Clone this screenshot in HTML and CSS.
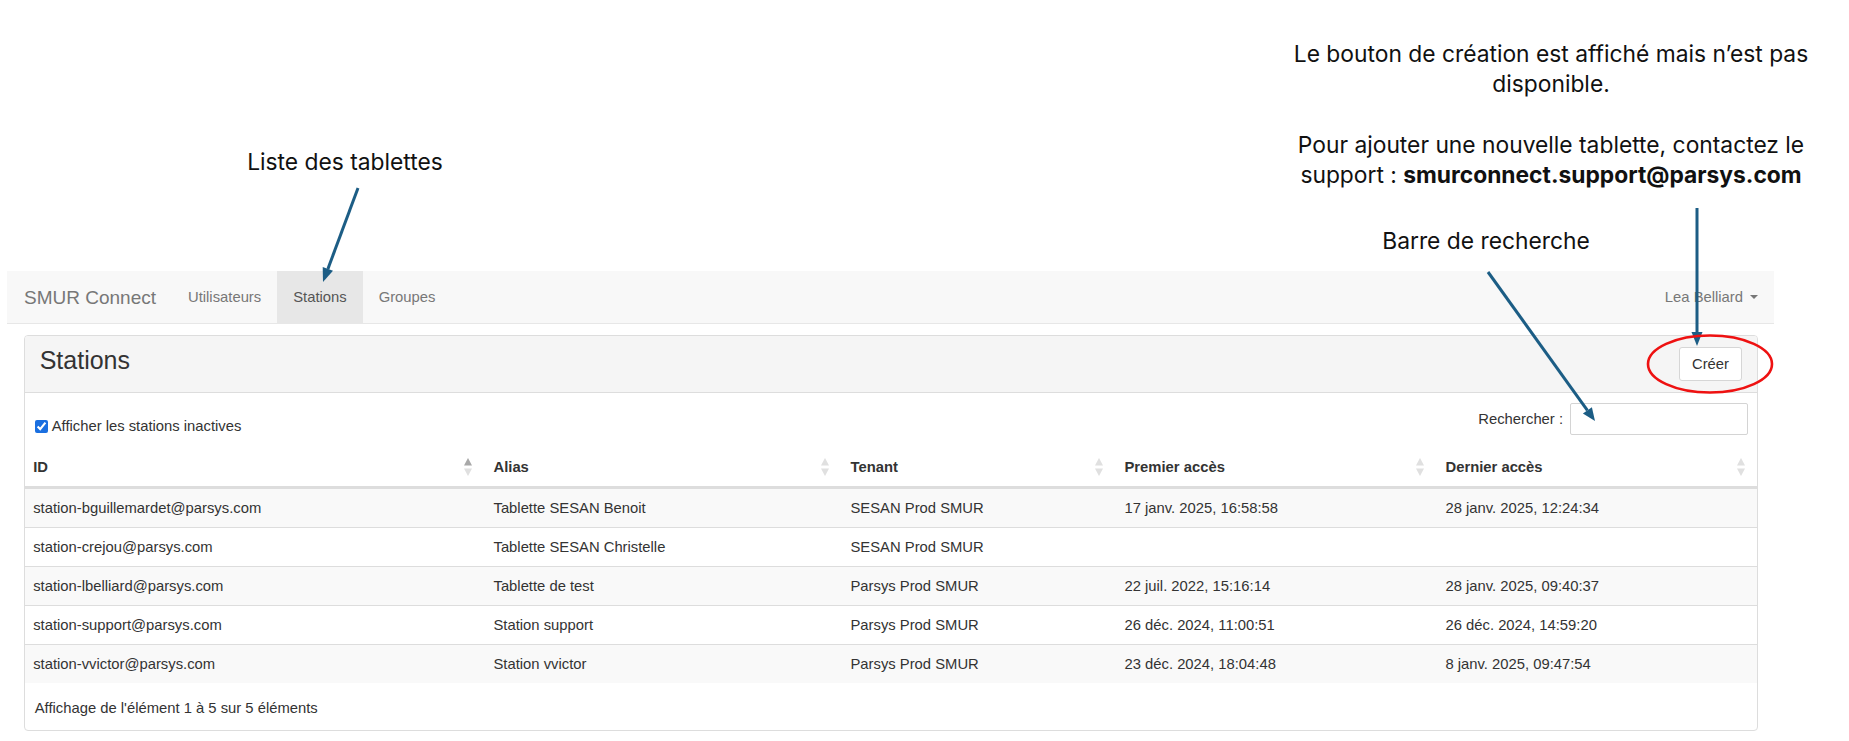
FILE: index.html
```html
<!DOCTYPE html>
<html lang="fr">
<head>
<meta charset="utf-8">
<title>Stations - SMUR Connect</title>
<link rel="stylesheet" href="styles.css">
</head>
<body>
<div class="page">
  <section class="notes">
    <p class="note note-list">Liste des tablettes</p>
    <div class="note note-create">
      <p>Le bouton de création est affiché mais n’est pas<br>disponible.</p>
      <p>Pour ajouter une nouvelle tablette, contactez le<br>support : <strong>smurconnect.support@parsys.com</strong></p>
    </div>
    <p class="note note-search">Barre de recherche</p>
  </section>

  <div class="app">
    <nav class="navbar">
      <a class="brand">SMUR Connect</a>
      <ul class="nav">
        <li><a>Utilisateurs</a></li>
        <li class="active"><a>Stations</a></li>
        <li><a>Groupes</a></li>
      </ul>
      <div class="user">Lea Belliard<span class="caret"></span></div>
    </nav>

    <main class="content">
      <div class="panel">
        <div class="panel-heading">
          <h3 class="panel-title">Stations</h3>
          <button class="btn" type="button">Créer</button>
        </div>

        <div class="controls">
          <label class="inactive"><input type="checkbox" checked>Afficher les stations inactives</label>
          <label class="search">Rechercher :<input type="search"></label>
        </div>

        <table class="stations">
          <colgroup>
            <col class="c-id"><col class="c-alias"><col class="c-tenant"><col class="c-first"><col class="c-last">
          </colgroup>
          <thead>
            <tr>
              <th><div class="th"><span>ID</span><svg class="sort asc" viewBox="0 0 8 18"><path class="up" d="M0 7.5 L4 0 L8 7.5 Z"/><path class="down" d="M0 10.5 L8 10.5 L4 18 Z"/></svg></div></th>
              <th><div class="th"><span>Alias</span><svg class="sort" viewBox="0 0 8 18"><path class="up" d="M0 7.5 L4 0 L8 7.5 Z"/><path class="down" d="M0 10.5 L8 10.5 L4 18 Z"/></svg></div></th>
              <th><div class="th"><span>Tenant</span><svg class="sort" viewBox="0 0 8 18"><path class="up" d="M0 7.5 L4 0 L8 7.5 Z"/><path class="down" d="M0 10.5 L8 10.5 L4 18 Z"/></svg></div></th>
              <th><div class="th"><span>Premier accès</span><svg class="sort" viewBox="0 0 8 18"><path class="up" d="M0 7.5 L4 0 L8 7.5 Z"/><path class="down" d="M0 10.5 L8 10.5 L4 18 Z"/></svg></div></th>
              <th><div class="th"><span>Dernier accès</span><svg class="sort" viewBox="0 0 8 18"><path class="up" d="M0 7.5 L4 0 L8 7.5 Z"/><path class="down" d="M0 10.5 L8 10.5 L4 18 Z"/></svg></div></th>
            </tr>
          </thead>
          <tbody>
            <tr><td>station-bguillemardet@parsys.com</td><td>Tablette SESAN Benoit</td><td>SESAN Prod SMUR</td><td>17 janv. 2025, 16:58:58</td><td>28 janv. 2025, 12:24:34</td></tr>
            <tr><td>station-crejou@parsys.com</td><td>Tablette SESAN Christelle</td><td>SESAN Prod SMUR</td><td></td><td></td></tr>
            <tr><td>station-lbelliard@parsys.com</td><td>Tablette de test</td><td>Parsys Prod SMUR</td><td>22 juil. 2022, 15:16:14</td><td>28 janv. 2025, 09:40:37</td></tr>
            <tr><td>station-support@parsys.com</td><td>Station support</td><td>Parsys Prod SMUR</td><td>26 déc. 2024, 11:00:51</td><td>26 déc. 2024, 14:59:20</td></tr>
            <tr><td>station-vvictor@parsys.com</td><td>Station vvictor</td><td>Parsys Prod SMUR</td><td>23 déc. 2024, 18:04:48</td><td>8 janv. 2025, 09:47:54</td></tr>
          </tbody>
        </table>

        <div class="info">Affichage de l'élément 1 à 5 sur 5 éléments</div>
      </div>
    </main>
  </div>

  <svg class="overlay" viewBox="0 0 1849 741" width="1849" height="741">
    <g class="arrow">
      <line x1="358" y1="188" x2="327.9" y2="268.9"/>
      <polygon points="323,282 333.0,270.8 322.7,267.0"/>
      <line x1="1697" y1="208" x2="1697" y2="333"/>
      <polygon points="1697,346 1691.5,332 1702.5,332"/>
      <line x1="1488" y1="272" x2="1587.4" y2="410.4"/>
      <polygon points="1595,421 1591.9,407.2 1582.9,413.6"/>
    </g>
    <ellipse class="ring" cx="1710" cy="364" rx="62" ry="28.5"/>
  </svg>
</div>
</body>
</html>
```

FILE: styles.css
```css
* { box-sizing: border-box; }

html, body {
  margin: 0;
  padding: 0;
  background: #ffffff;
}

body {
  font-family: "Liberation Sans", Arial, Helvetica, sans-serif;
  font-size: 14.8px;
  line-height: 21px;
  color: #333333;
}

.page {
  position: relative;
  width: 1849px;
  height: 741px;
  overflow: hidden;
}

/* ---------- annotation callouts (free canvas) ---------- */
.notes {
  position: relative;
  height: 271px;
  font-family: Inter, "Noto Sans", sans-serif;
  color: #111111;
}

.note {
  position: absolute;
  margin: 0;
  text-align: center;
  font-size: 22.8px;
  line-height: 29.7px;
  white-space: nowrap;
}

.note p { margin: 0; }
.note p + p { margin-top: 31.5px; }
.note strong { font-weight: 700; }

.note-list   { left: 195px;  top: 147px; width: 300px; }
.note-create { left: 1251px; top: 39px;  width: 600px; }
.note-search { left: 1336px; top: 226px; width: 300px; }

/* ---------- app ---------- */
.app {
  margin-left: 7px;
  width: 1767px;
}

.navbar {
  display: flex;
  align-items: stretch;
  height: 53px;
  background: #f8f8f8;
  border-bottom: 1px solid #e7e7e7;
}

.brand {
  display: flex;
  align-items: center;
  padding: 0 16px 0 17px;
  font-size: 19px;
  color: #777777;
}

.nav {
  display: flex;
  margin: 0;
  padding: 0;
  list-style: none;
}

.nav li { display: flex; }

.nav a {
  display: flex;
  align-items: center;
  padding: 0 16px;
  color: #777777;
}

.nav .active a {
  background: #e7e7e7;
  color: #555555;
}

.user {
  display: flex;
  align-items: center;
  margin-left: auto;
  padding: 0 16px;
  color: #777777;
}

.caret {
  display: inline-block;
  width: 0;
  height: 0;
  margin-left: 7px;
  border-top: 4.5px solid #777777;
  border-left: 4.5px solid transparent;
  border-right: 4.5px solid transparent;
}

.content {
  padding: 11px 16px 0 16.7px;
}

.panel {
  border: 1px solid #dddddd;
  border-radius: 4px;
  background: #ffffff;
}

.panel-heading {
  display: flex;
  align-items: center;
  justify-content: space-between;
  padding: 11px 15px 11px 15px;
  background: #f5f5f5;
  border-bottom: 1px solid #dddddd;
  border-radius: 3px 3px 0 0;
}

.panel-title {
  margin: -8px 0 0 0;
  font-size: 25px;
  font-weight: normal;
  line-height: 30px;
  color: #333333;
}

.btn {
  height: 34px;
  padding: 0 12px;
  font-family: inherit;
  font-size: 14.8px;
  color: #333333;
  background: #ffffff;
  border: 1px solid #d6d6d6;
  border-radius: 3px;
}

.controls {
  display: flex;
  align-items: flex-start;
  justify-content: space-between;
  padding: 10px 9px 0 10px;
}

.inactive {
  display: flex;
  align-items: center;
  margin-top: 13px;
}

.inactive input {
  width: 13px;
  height: 13px;
  margin: 0 4px 0 0;
  accent-color: #1a6fe0;
}

.search {
  display: flex;
  align-items: center;
}

.search input {
  width: 178px;
  height: 32px;
  margin: 0 0 0 7px;
  border: 1px solid #d4d4d4;
  border-radius: 2px;
  background: #ffffff;
}

.stations {
  width: 100%;
  margin-top: 11px;
  border-collapse: separate;
  border-spacing: 0;
  table-layout: fixed;
}

.c-id     { width: 460.3px; }
.c-alias  { width: 357px; }
.c-tenant { width: 274px; }
.c-first  { width: 321px; }
.c-last   { width: 320px; }

.stations th {
  padding: 8.5px 12.5px 8.5px 8.5px;
  text-align: left;
  font-weight: bold;
  border-bottom: 2px solid #dddddd;
}

.th {
  display: flex;
  align-items: center;
  justify-content: space-between;
}

.sort {
  width: 8px;
  height: 18px;
  flex: none;
}

.sort path { fill: #e0e0e0; }
.sort.asc .up { fill: #a8a8a8; }

.stations td {
  padding: 8.5px;
  border-top: 1px solid #dddddd;
  white-space: nowrap;
}

.stations tbody tr:nth-child(odd) td {
  background: #f9f9f9;
}

.info {
  padding: 15px 10px 11px 10px;
}

/* ---------- overlay arrows ---------- */
.overlay {
  position: absolute;
  top: 0;
  left: 0;
  pointer-events: none;
}

.arrow line {
  stroke: #1c5d85;
  stroke-width: 3;
}

.arrow polygon {
  fill: #1c5d85;
}

.ring {
  fill: none;
  stroke: #ee1111;
  stroke-width: 2.6;
}
```
